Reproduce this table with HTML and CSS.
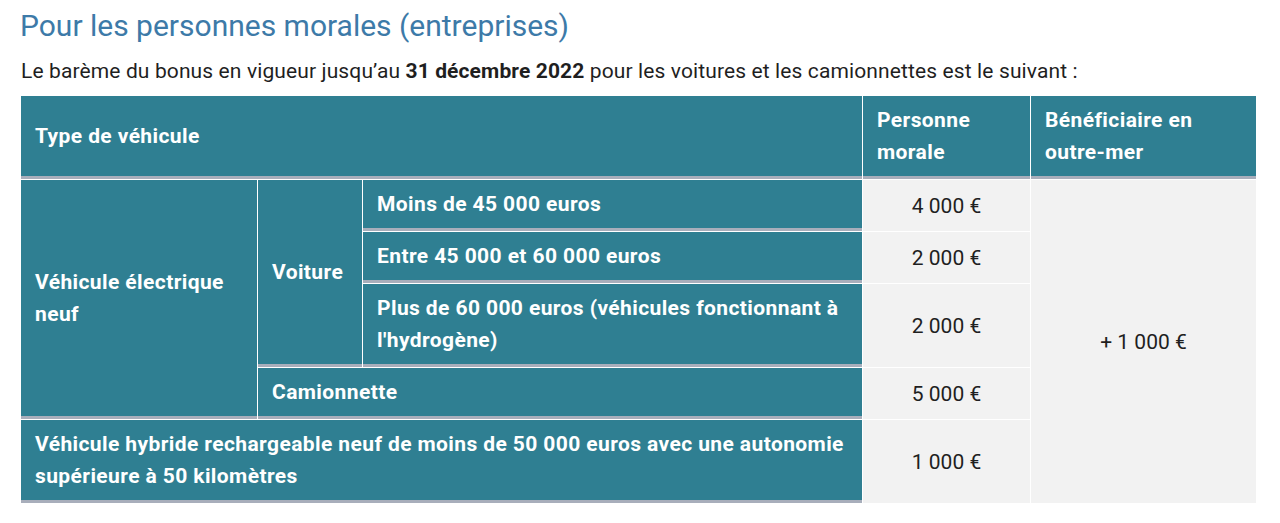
FILE: index.html
```html
<!DOCTYPE html>
<html lang="fr">
<head>
<meta charset="utf-8">
<link rel="stylesheet" href="styles.css">
</head>
<body>
<main class="page">
  <h2 class="title">Pour les personnes morales (entreprises)</h2>
  <p class="intro">Le barème du bonus en vigueur jusqu’au <strong>31 décembre 2022</strong> pour les voitures et les camionnettes est le suivant :</p>
  <table class="bonus">
    <colgroup>
      <col class="c1"><col class="c2"><col class="c3"><col class="c4"><col class="c5">
    </colgroup>
    <thead>
      <tr>
        <th colspan="3">Type de véhicule</th>
        <th>Personne morale</th>
        <th>Bénéficiaire en outre-mer</th>
      </tr>
    </thead>
    <tbody>
      <tr>
        <th rowspan="4">Véhicule électrique neuf</th>
        <th rowspan="3">Voiture</th>
        <th>Moins de 45 000 euros</th>
        <td>4 000 €</td>
        <td rowspan="5">+ 1 000 €</td>
      </tr>
      <tr>
        <th>Entre 45 000 et 60 000 euros</th>
        <td>2 000 €</td>
      </tr>
      <tr>
        <th>Plus de 60 000 euros (véhicules fonctionnant à l'hydrogène)</th>
        <td>2 000 €</td>
      </tr>
      <tr>
        <th colspan="2">Camionnette</th>
        <td>5 000 €</td>
      </tr>
      <tr>
        <th colspan="3">Véhicule hybride rechargeable neuf de moins de 50 000 euros avec une autonomie supérieure à 50 kilomètres</th>
        <td>1 000 €</td>
      </tr>
    </tbody>
  </table>
</main>
</body>
</html>
```

FILE: styles.css
```css
html, body {
  margin: 0;
  padding: 0;
  background: #ffffff;
}

.page {
  padding: 0 0 0 20px;
  font-family: Roboto, "Liberation Sans", sans-serif;
  color: #1f1f1f;
}

.title {
  margin: 0;
  padding-top: 8px;
  font-size: 30px;
  line-height: 36px;
  font-weight: 400;
  color: #3d7aa8;
}

.intro {
  margin: 13px 0 0 1px;
  font-size: 21px;
  line-height: 28px;
  letter-spacing: 0.12px;
}

.intro strong {
  font-weight: 700;
}

.bonus {
  margin-top: 10px;
  width: 1237px;
  table-layout: fixed;
  border-collapse: separate;
  border-spacing: 1px 1.5px;
  font-size: 21px;
  line-height: 32px;
}

.c1 { width: 236px; }
.c2 { width: 104px; }
.c3 { width: 499px; }
.c4 { width: 167px; }
.c5 { width: 225px; }

.bonus th {
  background: #2f7f92;
  color: #ffffff;
  font-weight: 700;
  letter-spacing: 0.4px;
  text-align: left;
  vertical-align: middle;
  padding: 8px 10px 8px 14px;
  border-bottom: 3px solid #a8aebb;
}

.bonus td {
  background: #f2f2f2;
  color: #1f1f1f;
  text-align: center;
  vertical-align: middle;
  padding: 8px 10px;
}
```
